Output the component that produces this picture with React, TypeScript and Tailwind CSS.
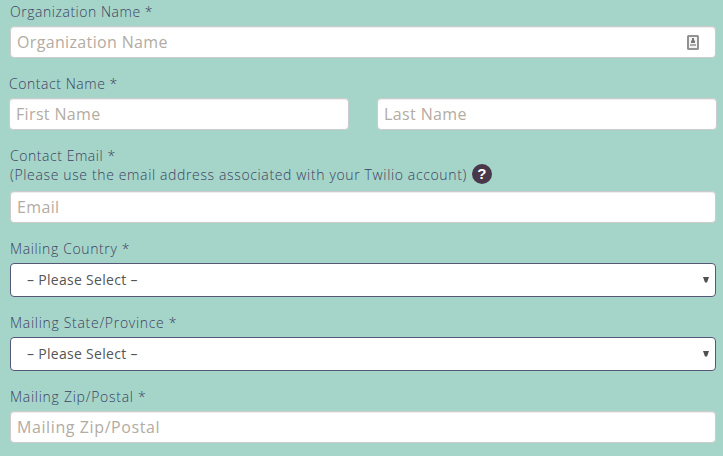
import type { ReactNode } from 'react';

const font = "font-['Open_Sans','Noto_Sans',sans-serif]";

function Label({ children, className = '' }: { children: ReactNode; className?: string }) {
  return <label className={`block h-[19px] whitespace-nowrap text-[14px] leading-[19px] font-light text-[#3d3f62] ${className}`}>{children}</label>;
}

function Field({ placeholder, spacing, icon }: { placeholder: string; spacing: string; icon?: ReactNode }) {
  return (
    <div className="flex h-8 w-full items-center justify-between rounded-[4px] border border-[#ccc] bg-white pr-4 pl-1.5 shadow-[inset_0_1px_1px_rgba(0,0,0,0.075)]">
      <span className={`whitespace-nowrap text-[16px] leading-[22px] font-normal text-[#b3aca2] ${spacing}`}>{placeholder}</span>
      {icon}
    </div>
  );
}

function ContactIcon() {
  return (
    <svg width="12" height="15" viewBox="0 0 12 15">
      <rect x="1" y="1" width="10" height="13" rx="0.5" fill="#f4f4f4" stroke="#929292" strokeWidth="2" />
      <path d="M5 3h2v2l1 1v2H4V6l1-1z" fill="#777" />
      <path d="M3 9h6v2H3z" fill="#aaa" />
    </svg>
  );
}

function Select() {
  return (
    <div className="flex h-[34px] w-full items-center justify-between rounded-[4px] border border-[#565678] bg-white pr-[6px] pl-4">
      <span className="whitespace-nowrap text-[14px] leading-5 font-normal tracking-[0.3px] text-[#555]">– Please Select –</span>
      <svg className="mb-px" width="6" height="6" viewBox="0 0 6 6"><path d="M0 0h6L4 5.5H2z" fill="#505050" /></svg>
    </div>
  );
}

export default function App() {
  return (
    <main className={`h-[456px] w-[723px] overflow-hidden bg-[#a5d5c9] pt-[2px] pr-[7px] pl-[10px] ${font}`}>
      <Label className="tracking-[0.53px]">Organization Name *</Label>
      <div className="mt-[5px]"><Field placeholder="Organization Name" spacing="tracking-[0.35px]" icon={<ContactIcon />} /></div>
      <Label className="-ml-px mt-[16px] tracking-[0.55px]">Contact Name *</Label>
      <div className="mt-[5px] -mr-px -ml-px grid grid-cols-2 gap-7">
        <Field placeholder="First Name" spacing="tracking-[0.35px]" />
        <Field placeholder="Last Name" spacing="tracking-[0.38px]" />
      </div>
      <Label className="mt-[16px] tracking-[0.55px]">Contact Email *</Label>
      <div className="flex h-[19px] items-center gap-[5px]">
        <Label className="tracking-[0.64px]">(Please use the email address associated with your Twilio account)</Label>
        <span className="mb-0.5 flex size-5 shrink-0 items-center justify-center rounded-full bg-[#49384a] font-['Liberation_Sans',sans-serif] text-[15px] leading-5 font-bold text-white">?</span>
      </div>
      <div className="mt-[7px]"><Field placeholder="Email" spacing="tracking-[0.35px]" /></div>
      <Label className="mt-[16px] tracking-[0.62px]">Mailing Country *</Label>
      <div className="mt-[5px]"><Select /></div>
      <Label className="mt-[16px] tracking-[0.7px]">Mailing State/Province *</Label>
      <div className="mt-[5px]"><Select /></div>
      <Label className="mt-[16px] tracking-[0.72px]">Mailing Zip/Postal *</Label>
      <div className="mt-[5px]"><Field placeholder="Mailing Zip/Postal" spacing="tracking-[0.6px]" /></div>
    </main>
  );
}
